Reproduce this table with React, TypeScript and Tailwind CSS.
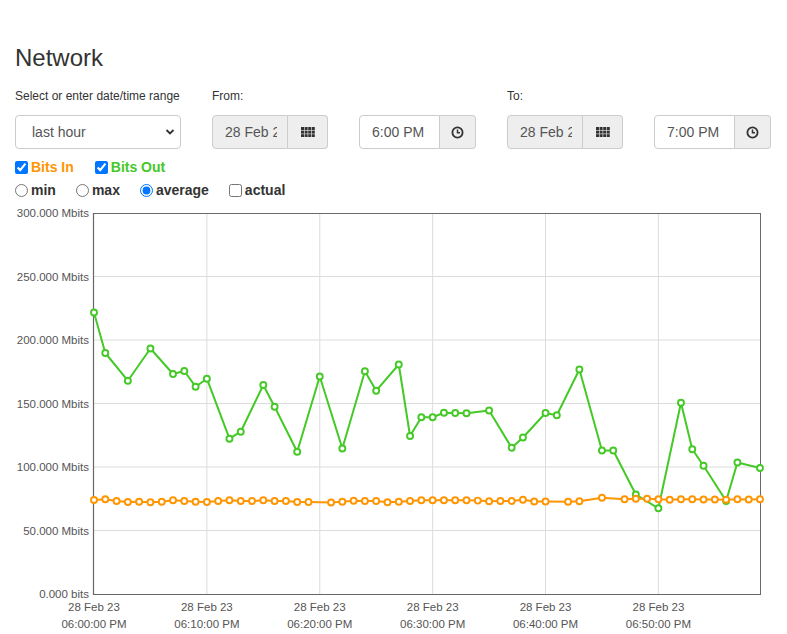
import React from "react";

const X0 = 94;
const X1 = 760;
const STEP = (X1 - X0) / 59;

const green: [number, number][] = [
  [0, 312.5], [1, 353], [3, 380.7], [5, 348.5], [7, 374], [8, 371], [9, 386.7], [10, 378.7],
  [12, 438.7], [13, 431.7], [15, 385], [16, 406.7], [18, 451.7], [20, 376.5], [22, 448.5],
  [24, 371.2], [25, 390.7], [27, 364.5], [28, 436], [29, 417.2], [30, 417.3], [31, 412.8],
  [32, 413], [33, 413.3], [35, 410.5], [37, 447.7], [38, 437.5], [40, 413], [41, 415.3],
  [43, 369.5], [45, 450.5], [46, 450.5], [48, 494.5], [50, 508.3], [52, 402.8], [53, 449.3],
  [54, 465.7], [56, 501], [57, 462.5], [59, 468],
];

const orange: [number, number][] = [
  [0, 500], [1, 499.3], [2, 501], [3, 502], [4, 501.7], [5, 502.3], [6, 501.7], [7, 500.3],
  [8, 501], [9, 501.7], [10, 502], [11, 501], [12, 500.3], [13, 501], [14, 501], [15, 500.3],
  [16, 501], [17, 501], [18, 502], [19, 502], [21, 502.5], [22, 501.7], [23, 500.8], [24, 501],
  [25, 501], [26, 502.3], [27, 501.7], [28, 501], [29, 500.3], [30, 500.3], [31, 500.3],
  [32, 500.3], [33, 500.3], [34, 500.6], [35, 501.3], [36, 501], [37, 501], [38, 499.8],
  [39, 501.5], [40, 501.5], [42, 501.7], [43, 501.3], [45, 497.7], [47, 499.3], [48, 498.7],
  [49, 498.7], [50, 499.3], [51, 499.7], [52, 499.3], [53, 499.3], [54, 499.5], [55, 499.5],
  [56, 499.7], [57, 499.3], [58, 499.5], [59, 499.3],
];

const yTicks = [
  { y: 213, t: "300.000 Mbits" },
  { y: 276.5, t: "250.000 Mbits" },
  { y: 340, t: "200.000 Mbits" },
  { y: 403.5, t: "150.000 Mbits" },
  { y: 467, t: "100.000 Mbits" },
  { y: 530.5, t: "50.000 Mbits" },
  { y: 594, t: "0.000 bits" },
];

const xTicks = ["06:00:00 PM", "06:10:00 PM", "06:20:00 PM", "06:30:00 PM", "06:40:00 PM", "06:50:00 PM"];

function Series({ data, color }: { data: [number, number][]; color: string }) {
  const pts = data.map(([n, y]) => [X0 + n * STEP, y]);
  return (
    <g>
      <polyline
        points={pts.map(([x, y]) => `${x},${y}`).join(" ")}
        fill="none"
        stroke={color}
        strokeWidth={2}
        strokeLinejoin="round"
      />
      {pts.map(([x, y], i) => (
        <circle key={i} cx={x} cy={y} r={3} fill="#fff" stroke={color} strokeWidth={1.9} />
      ))}
    </g>
  );
}

function Chart() {
  return (
    <svg
      width={787}
      height={432}
      viewBox="0 202 787 432"
      className="block font-['Liberation_Sans',Arial,sans-serif]"
    >
      {yTicks.slice(1, 6).map((t) => (
        <line key={t.y} x1={93} x2={760} y1={t.y} y2={t.y} stroke="#dcdcdc" strokeWidth={1} />
      ))}
      {[1, 2, 3, 4, 5].map((i) => {
        const x = X0 + i * 10 * STEP;
        return <line key={i} x1={x} x2={x} y1={213} y2={594} stroke="#dcdcdc" strokeWidth={1} />;
      })}
      <line x1={93} x2={760.5} y1={213.5} y2={213.5} stroke="#6a6a6a" strokeWidth={1} />
      <line x1={760.5} x2={760.5} y1={213} y2={594} stroke="#6a6a6a" strokeWidth={1} />
      <line x1={93.5} x2={93.5} y1={213} y2={595} stroke="#666" strokeWidth={1.2} />
      <line x1={93} x2={761} y1={594.5} y2={594.5} stroke="#666" strokeWidth={1.2} />
      {yTicks.map((t) => (
        <text key={t.t} x={89} y={t.y + 4.2} textAnchor="end" fontSize={11.5} fill="#555">
          {t.t}
        </text>
      ))}
      {xTicks.map((t, i) => {
        const x = X0 + i * 10 * STEP;
        return (
          <g key={t}>
            <text x={x} y={611} textAnchor="middle" fontSize={11.5} fill="#555">
              28 Feb 23
            </text>
            <text x={x} y={628} textAnchor="middle" fontSize={11.5} fill="#555">
              {t}
            </text>
          </g>
        );
      })}
      <Series data={green} color="#44c926" />
      <Series data={orange} color="#ff9500" />
    </svg>
  );
}

function GridIcon() {
  const sq = [];
  for (let r = 0; r < 3; r++)
    for (let c = 0; c < 4; c++)
      sq.push(<rect key={`${r}-${c}`} x={c * 3.6} y={r * 3.6} width={3} height={3} fill="#333" />);
  return (
    <svg width={14} height={10.5} viewBox="0 0 14 10.5">
      {sq}
    </svg>
  );
}

function ClockIcon() {
  return (
    <svg width={13} height={13} viewBox="0 0 13 13">
      <circle cx={6.5} cy={6.5} r={5.1} fill="none" stroke="#333" strokeWidth={1.8} />
      <path d="M6.5 3.4V6.8H9" fill="none" stroke="#333" strokeWidth={1.5} />
    </svg>
  );
}

function DateGroup() {
  return (
    <div className="flex h-[34px] w-[116px]">
      <div className="flex h-full w-[76px] items-center overflow-hidden whitespace-nowrap rounded-l-[4px] border border-[#ccc] bg-[#eee] pl-[12px] pr-[10px] text-[14px] text-[#555]">
        <span className="block w-full overflow-hidden">28 Feb 2023</span>
      </div>
      <div className="flex h-full w-[40px] items-center justify-center rounded-r-[4px] border border-l-0 border-[#ccc] bg-[#eee]">
        <GridIcon />
      </div>
    </div>
  );
}

function TimeGroup({ value }: { value: string }) {
  return (
    <div className="flex h-[34px] w-[117px]">
      <div className="flex h-full w-[81px] items-center whitespace-nowrap rounded-l-[4px] border border-[#ccc] bg-white pl-[12px] text-[14px] text-[#555]">
        {value}
      </div>
      <div className="flex h-full w-[36px] items-center justify-center rounded-r-[4px] border border-l-0 border-[#ccc] bg-[#eee]">
        <ClockIcon />
      </div>
    </div>
  );
}

export default function App() {
  return (
    <div className="w-[787px] h-[634px] overflow-hidden bg-white font-['Liberation_Sans',Arial,sans-serif] text-[#333]">
      <div className="px-[15px] pt-[45px]">
        <h1 className="m-0 text-[24px] font-normal leading-[26px]">Network</h1>
        <div className="mt-[17px] flex h-[17px] text-[12px] leading-[17px]">
          <div className="w-[197px]">Select or enter date/time range</div>
          <div className="w-[295px]">From:</div>
          <div>To:</div>
        </div>
        <div className="mt-[10px] flex h-[34px]">
          <div className="w-[197px]">
            <div className="relative h-[34px] w-[166px] rounded-[4px] border border-[#ccc] bg-white">
              <div className="flex h-full items-center pl-[16px] text-[14px] text-[#555]">last hour</div>
              <svg
                className="absolute right-[5px] top-[12px]"
                width={10}
                height={8}
                viewBox="0 0 10 8"
              >
                <path d="M1.5 2L5 5.5L8.5 2" fill="none" stroke="#333" strokeWidth={1.8} />
              </svg>
            </div>
          </div>
          <div className="flex w-[295px] gap-[31px]">
            <DateGroup />
            <TimeGroup value="6:00 PM" />
          </div>
          <div className="flex gap-[31px]">
            <DateGroup />
            <TimeGroup value="7:00 PM" />
          </div>
        </div>
        <div className="mt-[7px] flex h-[23px] items-center gap-[21px] text-[14px] font-bold">
          <label className="flex items-center">
            <input type="checkbox" defaultChecked className="m-0 h-[13px] w-[13px]" />
            <span className="ml-[3px] text-[#ff9500]">Bits In</span>
          </label>
          <label className="flex items-center">
            <input type="checkbox" defaultChecked className="m-0 h-[13px] w-[13px]" />
            <span className="ml-[3px] text-[#44c926]">Bits Out</span>
          </label>
        </div>
        <div className="flex h-[23px] items-center gap-[20px] text-[14px] font-bold text-[#333]">
          <label className="flex items-center">
            <input type="radio" name="agg" className="m-0 h-[13px] w-[13px]" />
            <span className="ml-[3px]">min</span>
          </label>
          <label className="flex items-center">
            <input type="radio" name="agg" className="m-0 h-[13px] w-[13px]" />
            <span className="ml-[3px]">max</span>
          </label>
          <label className="flex items-center">
            <input type="radio" name="agg" defaultChecked className="m-0 h-[13px] w-[13px]" />
            <span className="ml-[3px]">average</span>
          </label>
          <label className="flex items-center">
            <input type="checkbox" className="m-0 h-[13px] w-[13px]" />
            <span className="ml-[3px]">actual</span>
          </label>
        </div>
      </div>
      <Chart />
    </div>
  );
}
